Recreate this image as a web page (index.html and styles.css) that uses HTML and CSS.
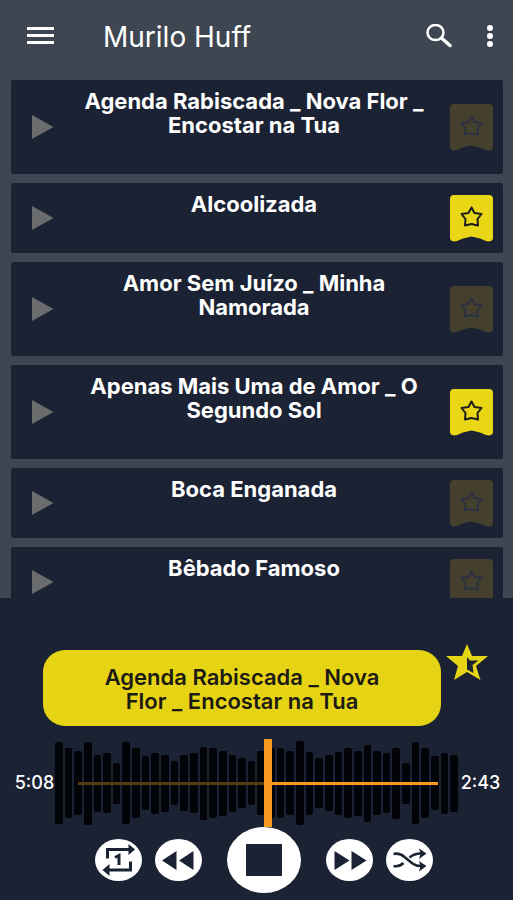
FILE: index.html
```html
<!DOCTYPE html>
<html lang="pt-BR">
<head>
    <meta charset="UTF-8">
    <meta name="viewport" content="width=device-width, initial-scale=1.0">
    <title>Murilo Huff</title>
    <link rel="stylesheet" href="styles.css">
</head>
<body>
    <svg class="symbols" aria-hidden="true">
        <symbol id="play" viewBox="0 0 22 24">
            <path d="M0 0L21.500 12L0 24Z"/>
        </symbol>
        <symbol id="bookmark" viewBox="0 0 43 47">
            <path class="ribbon" d="M4 0H39Q43 0 43 4V43Q43 46 39 46.500Q35 46 30 43.500L21.500 41.500L13 43.500Q8 46 4 46.500Q0 46 0 43V4Q0 0 4 0Z"/>
            <path class="outline" d="M21.500 12.500L24.500 18L31.500 19L27.500 24L28 30.500L21.500 29L15 30.500L15.500 24L11.500 19L18.500 18Z"/>
        </symbol>
    </svg>

    <header class="topbar">
        <button class="icon-btn" aria-label="Menu">
            <svg width="28" height="20" viewBox="0 0 28 20"><path d="M1 2.500H28M1 9.500H28M1 16.500H28" stroke="#fff" stroke-width="3"/></svg>
        </button>
        <h1>Murilo Huff</h1>
        <button class="icon-btn" aria-label="Buscar">
            <svg width="26" height="24" viewBox="0 0 26 24" fill="none" stroke="#fff">
                <ellipse cx="9.500" cy="8.500" rx="8" ry="7.500" stroke-width="2.500"/>
                <path d="M15.500 14L24 21.500" stroke-width="3.500" stroke-linecap="round"/>
            </svg>
        </button>
        <button class="icon-btn more" aria-label="Mais">
            <svg width="8" height="22" viewBox="0 0 8 22" fill="#fff">
                <circle cx="4" cy="3" r="3"/><circle cx="4" cy="11" r="3"/><circle cx="4" cy="19" r="3"/>
            </svg>
        </button>
    </header>

    <main class="songs" id="songs"></main>

    <section class="player">
        <div class="now-playing">
            <button class="current">Agenda Rabiscada _ Nova Flor _ Encostar na Tua</button>
            <button class="half-star" aria-label="Favorito">
                <svg width="42" height="37" viewBox="0 0 42 37">
                    <path fill="#e6d514" fill-rule="evenodd" d="M21 0L26 12H42L30 22L34.500 36L21 28L8 36L12 22L0 12H16ZM21 13V25.500L27.500 29L26.500 21L32.500 16.500H24Z"/>
                </svg>
            </button>
        </div>

        <div class="track">
            <span class="time">5:08</span>
            <div class="wave">
                <div class="bars" id="bars"></div>
                <input class="seek" type="range" min="0" max="1000" value="528" aria-label="Posição">
            </div>
            <span class="time">2:43</span>
        </div>

        <div class="controls">
            <button class="round" aria-label="Repetir uma">
                <svg viewBox="0 0 46 42">
                    <path d="M12 19.500V10.500H35M35 22.500V31H13" fill="none" stroke="#1b2233" stroke-width="3"/>
                    <path d="M33 5L39.500 10.500L33 16ZM14 25L7 31L14 37Z"/>
                    <path d="M19.500 18.500L23.500 16.500V26" fill="none" stroke="#1b2233" stroke-width="3"/>
                </svg>
            </button>
            <button class="round" aria-label="Anterior">
                <svg viewBox="0 0 46 42"><path d="M21 12V31L6.500 21.500ZM38 12V31L23.500 21.500Z"/></svg>
            </button>
            <button class="round stop" aria-label="Parar">
                <svg viewBox="0 0 74 66"><path d="M19 17H55V49H19Z"/></svg>
            </button>
            <button class="round" aria-label="Próxima">
                <svg viewBox="0 0 46 42"><path d="M8 12V31L23 21.500ZM25 12V31L40 21.500Z"/></svg>
            </button>
            <button class="round" aria-label="Aleatório">
                <svg viewBox="0 0 46 42">
                    <path d="M7 15Q13 13.500 18 18L26 24.500Q30 27.500 36 27M7 27Q13 28 17 24M23 18.500Q28 14 36 14.500" fill="none" stroke="#1b2233" stroke-width="2.500"/>
                    <path d="M32.500 9.500L40 14.500L32.500 20L34 14.500ZM32.500 22L40 27L32.500 32.500L34 27Z"/>
                </svg>
            </button>
        </div>
    </section>

    <script src="script.js"></script>
</body>
</html>
```
FILE: styles.css
```css
* {
    box-sizing: border-box;
}

body {
    margin: 0;
    height: 100vh;
    display: flex;
    flex-direction: column;
    background-color: #3e4751;
    color: #fff;
    font-family: Inter, "Liberation Sans", sans-serif;
}

button {
    padding: 0;
    border: none;
    background: none;
    color: inherit;
    font: inherit;
    cursor: pointer;
}

svg {
    display: block;
}

.symbols {
    position: absolute;
    width: 0;
    height: 0;
}

/* Top bar */
.topbar {
    flex: none;
    display: flex;
    align-items: center;
    height: 71px;
    padding: 2px 19px 0 26px;
    border-bottom: 1px solid #39414b;
}

.topbar h1 {
    flex: 1;
    margin: 2px 0 0 49px;
    font-size: 28px;
    line-height: 32px;
    font-weight: 400;
}

.more {
    margin-left: 34px;
}

/* Song list */
.songs {
    flex: 1;
    min-height: 0;
    overflow: hidden;
    display: flex;
    flex-direction: column;
    gap: 9px;
    padding: 9px 10px 0 11px;
}

.song {
    flex: none;
    display: flex;
    align-items: center;
    padding: 0 10px 0 21px;
    border-radius: 2px;
    background-color: #1b2233;
}

.play {
    fill: #6a6c6e;
}

.song h2 {
    flex: 1;
    align-self: flex-start;
    margin: 0 16px 0 20px;
    padding: 9px 0 37px;
    font-size: 22px;
    line-height: 24px;
    font-weight: 700;
    text-align: center;
}

.ribbon {
    fill: #45402d;
}

.outline {
    fill: none;
    stroke: #2b3142;
    stroke-width: 2;
    stroke-linejoin: round;
}

.saved .ribbon {
    fill: #e9d715;
}

.saved .outline {
    stroke: #1b1d1c;
}

/* Player */
.player {
    flex: none;
    padding: 46px 0 7px;
    background-color: #1b2233;
}

.now-playing {
    display: flex;
    align-items: flex-start;
    padding: 0 25px 0 43px;
}

.current {
    flex: 1;
    margin: 6px 5px 0 0;
    padding: 15px 50px 13px;
    border-radius: 22px;
    background-color: #e6d314;
    color: #1b1a14;
    font-size: 22px;
    line-height: 24px;
    font-weight: 600;
}

.track {
    display: flex;
    align-items: center;
    margin-top: 13px;
}

.time {
    width: 55px;
    padding-right: 10px;
    font-size: 18px;
    line-height: 24px;
    font-weight: 500;
    text-align: center;
}

.time:first-child {
    padding: 0 0 0 14px;
}

.wave {
    flex: 1;
    position: relative;
    height: 88px;
}

.bars {
    display: flex;
    align-items: center;
    gap: 2px;
    height: 100%;
}

.bar {
    flex: 1;
    border-radius: 2px;
    background-color: #020306;
}

/* Seek bar over the waveform */
.seek {
    -webkit-appearance: none;
    appearance: none;
    position: absolute;
    top: 0;
    left: 23px;
    width: calc(100% - 43px);
    height: 88px;
    margin: 0;
    background: linear-gradient(to right, #57380f 53%, #fb9a20 53%) center / 100% 3px no-repeat;
    cursor: pointer;
}

.seek::-webkit-slider-thumb {
    -webkit-appearance: none;
    width: 8px;
    height: 88px;
    background-color: #fb9a20;
}

/* Buttons under the waveform */
.controls {
    display: flex;
    justify-content: center;
    align-items: center;
    gap: 13px;
    padding-left: 15px;
}

.round {
    width: 47px;
    height: 42px;
    border-radius: 50%;
    background-color: #fff;
    fill: #1b2233;
}

.round svg {
    width: 100%;
    height: 100%;
}

.stop {
    width: 74px;
    height: 66px;
    margin: 0 12px;
}
```
FILE: script.js
```js
const songs = [
    { title: "Agenda Rabiscada _ Nova Flor _ Encostar na Tua", saved: false },
    { title: "Alcoolizada", saved: true },
    { title: "Amor Sem Juízo _ Minha Namorada", saved: false },
    { title: "Apenas Mais Uma de Amor _ O Segundo Sol", saved: true },
    { title: "Boca Enganada", saved: false },
    { title: "Bêbado Famoso", saved: false }
];

// height of every waveform bar, left to right
const levels = [
    82, 70, 64, 83, 57, 60, 41, 82, 70, 54, 61, 57, 44, 56,
    60, 73, 70, 65, 57, 50, 44, 64, 70, 70, 64, 84, 63, 50,
    56, 63, 70, 65, 77, 64, 60, 71, 41, 82, 70, 54, 61, 57
];

document.getElementById("songs").innerHTML = songs.map(song => `
    <article class="song">
        <button aria-label="Tocar"><svg class="play" width="22" height="24"><use href="#play"/></svg></button>
        <h2>${song.title}</h2>
        <button class="bookmark" aria-label="Favorito">
            <svg class="${song.saved ? "saved" : ""}" width="43" height="47"><use href="#${song.saved ? "bookmark-saved" : "bookmark"}"/></svg>
        </button>
    </article>
`).join("");

// saved songs get their own copy of the bookmark symbol
const savedSymbol = document.getElementById("bookmark").cloneNode(true);
savedSymbol.id = "bookmark-saved";
savedSymbol.classList.add("saved");
document.querySelector(".symbols").appendChild(savedSymbol);

const bars = document.getElementById("bars");
levels.forEach(level => {
    const bar = document.createElement("span");
    bar.className = "bar";
    bar.style.height = level + "px";
    bars.appendChild(bar);
});
```
